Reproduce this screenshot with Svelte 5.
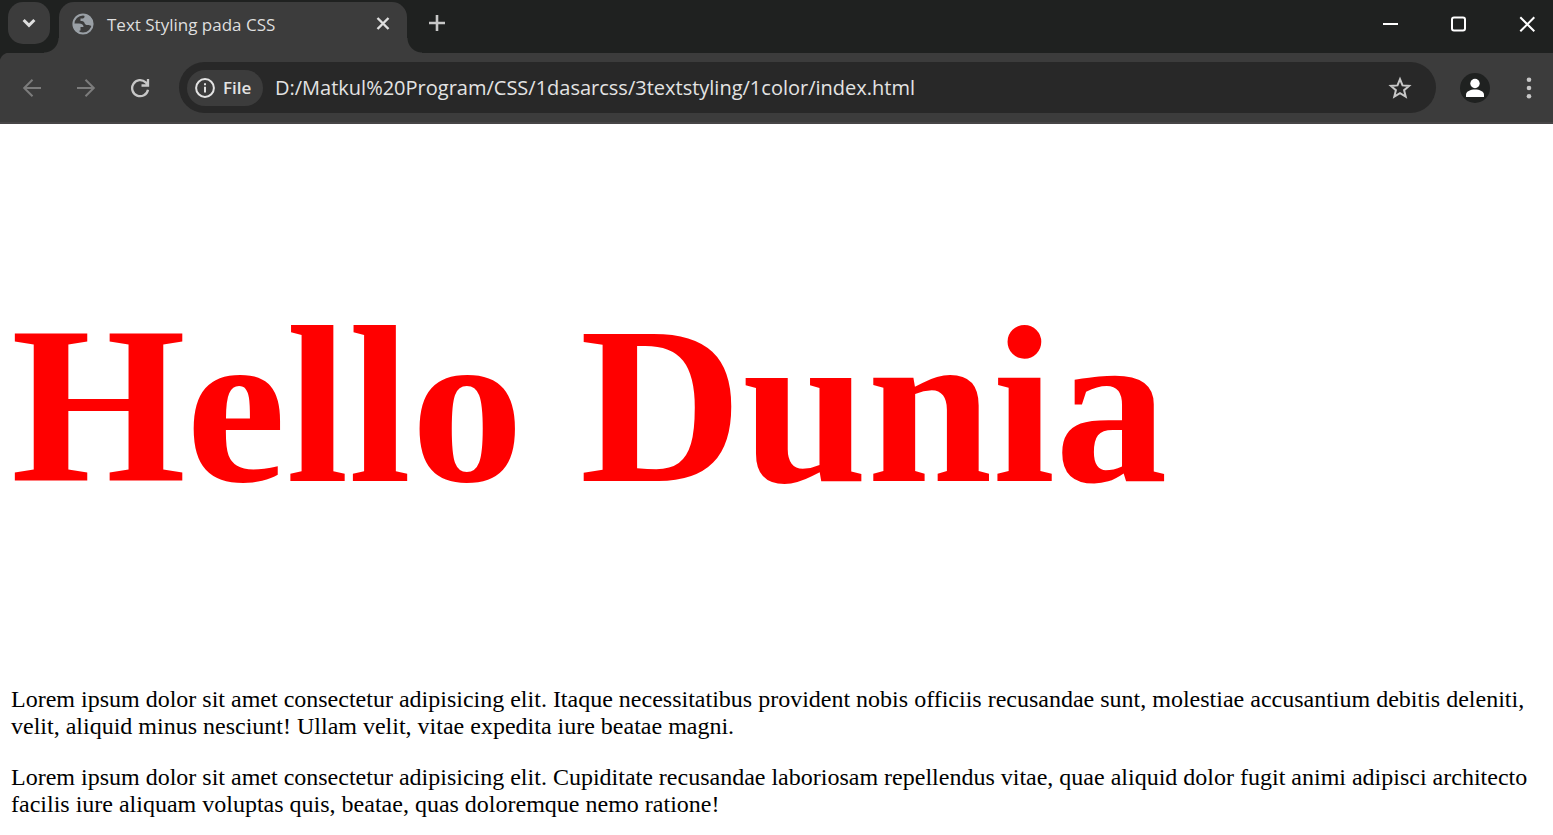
<script>
  let address = $state('D:/Matkul%20Program/CSS/1dasarcss/3textstyling/1color/index.html');
  const paragraphs = [
    'Lorem ipsum dolor sit amet consectetur adipisicing elit. Itaque necessitatibus provident nobis officiis recusandae sunt, molestiae accusantium debitis deleniti, velit, aliquid minus nesciunt! Ullam velit, vitae expedita iure beatae magni.',
    'Lorem ipsum dolor sit amet consectetur adipisicing elit. Cupiditate recusandae laboriosam repellendus vitae, quae aliquid dolor fugit animi adipisci architecto facilis iure aliquam voluptas quis, beatae, quas doloremque nemo ratione!'
  ];
</script>

<div class="window">
  <header class="strip">
    <button class="search" aria-label="Search tabs">
      <svg width="14" height="10" viewBox="0 0 14 10"><path d="M1.6 2l5.4 5.4L12.4 2" /></svg>
    </button>
    <div class="tab">
      <svg class="globe" width="22" height="22" viewBox="0 0 22 22">
        <circle cx="11" cy="11" r="9.6" />
        <path d="M1.5 10.5h5.500c3 0 4.500 1.500 4.500 3.500h-3v3.500h-1v3C3.500 19 1 15.500 1.500 10.500z" />
        <path d="M12.5 1.500v2c0 1.500-1 2-2.500 2H8.500v2.500c2.500 0 3.500.5 4 2 .5 1.500 1.500 2 3 2 2 0 3 .5 5 1.500C22 7 18.500 2 12.500 1.500z" />
      </svg>
      <span class="title">Text Styling pada CSS</span>
      <button class="plain close" aria-label="Close tab">
        <svg width="14" height="14" viewBox="0 0 14 14"><path d="M1.500 1l11 11M12.500 1L1.500 12" /></svg>
      </button>
    </div>
    <button class="plain add" aria-label="New tab">
      <svg width="16" height="16" viewBox="0 0 16 16"><path d="M8 0v16M0 8h16" /></svg>
    </button>
    <div class="controls">
      <button class="plain" aria-label="Minimize">
        <svg width="16" height="16" viewBox="0 0 16 16"><path d="M0 8h15" /></svg>
      </button>
      <button class="plain" aria-label="Maximize">
        <svg width="16" height="16" viewBox="0 0 16 16"><rect x="1" y="1.500" width="13" height="13" rx="2" /></svg>
      </button>
      <button class="plain" aria-label="Close">
        <svg width="16" height="16" viewBox="0 0 16 16"><path d="M1.300 1.300l14 14M15.300 1.300L1.300 15.300" /></svg>
      </button>
    </div>
  </header>

  <nav class="toolbar">
    <button class="plain nav dim" aria-label="Back">
      <svg width="20" height="20" viewBox="0 0 20 20"><path d="M19 10H2.500M10.500 1.700L2.200 10l8.300 8.300" /></svg>
    </button>
    <button class="plain nav dim" aria-label="Forward">
      <svg width="20" height="20" viewBox="0 0 20 20"><path d="M1 10h16.500M9.500 1.700l8.300 8.300-8.300 8.300" /></svg>
    </button>
    <button class="plain nav" aria-label="Reload">
      <svg width="20" height="20" viewBox="0 0 20 20"><path d="M18 11.700A8 8 0 1 1 15.700 4.400L18 6.800M18 1v6.500h-6.500" /></svg>
    </button>
    <div class="address">
      <button class="chip">
        <svg width="20" height="20" viewBox="0 0 20 20">
          <circle cx="10" cy="10" r="8.900" /><path d="M10 8.800v5.700M10 5.300v1.900" />
        </svg>
        File
      </button>
      <input type="text" aria-label="Address" spellcheck="false" bind:value={address} />
      <button class="plain star" aria-label="Bookmark this page">
        <svg width="24" height="24" viewBox="0 0 24 24"><path d="M12 3.200l2.500 6.200 6.600.5-5 4.300 1.600 6.500-5.700-3.500-5.700 3.500 1.600-6.500-5-4.300 6.600-.5z" /></svg>
      </button>
    </div>
    <button class="profile" aria-label="Profile">
      <svg width="20" height="20" viewBox="0 0 20 20"><circle cx="10" cy="5.500" r="4.700" /><path d="M1 19v-2.500c0-3 4.500-5 9-5s9 2 9 5V19z" /></svg>
    </button>
    <button class="plain more" aria-label="Menu">
      <svg width="6" height="22" viewBox="0 0 6 22"><circle cx="3" cy="2.700" r="2.300" /><circle cx="3" cy="11" r="2.300" /><circle cx="3" cy="19.300" r="2.300" /></svg>
    </button>
  </nav>

  <main>
    <h1>Hello Dunia</h1>
    {#each paragraphs as text}
      <p>{text}</p>
    {/each}
  </main>
</div>

<style>
  :global(body) {
    margin: 0;
    background: #fff;
  }
  .window {
    background: #fff;
    font-family: 'Open Sans', 'Noto Sans', sans-serif;
  }
  button {
    display: flex;
    align-items: center;
    justify-content: center;
    padding: 0;
    border: 0;
    color: inherit;
    font: inherit;
  }
  .plain {
    background: none;
  }
  svg {
    display: block;
    flex: none;
    fill: none;
    stroke: currentColor;
    stroke-width: 2;
  }
  .strip {
    display: flex;
    height: 53px;
    padding-left: 8px;
    background: #1f2120;
    color: #dfdfdf;
  }
  .search {
    width: 42px;
    height: 42px;
    margin-top: 2px;
    border-radius: 15px;
    background: #3c3c3c;
  }
  .search svg {
    stroke-width: 3;
  }
  .tab {
    position: relative;
    display: flex;
    align-items: center;
    box-sizing: border-box;
    width: 348px;
    height: 51px;
    margin: 2px 0 0 9px;
    padding: 0 16px 8px 13px;
    border-radius: 15px 15px 0 0;
    background: #3c3c3c;
  }
  .tab::before,
  .tab::after {
    content: '';
    position: absolute;
    bottom: 0;
    width: 15px;
    height: 15px;
  }
  .tab::before {
    right: 100%;
    background: radial-gradient(circle at 0 0, transparent 14px, #3c3c3c 15px);
  }
  .tab::after {
    left: 100%;
    background: radial-gradient(circle at 100% 0, transparent 14px, #3c3c3c 15px);
  }
  .globe {
    color: #9aa0a6;
  }
  .globe path {
    fill: currentColor;
    stroke: none;
  }
  .title {
    flex: 1;
    margin-left: 13px;
    padding-top: 2px;
    font-size: 17px;
    line-height: 24px;
    white-space: nowrap;
  }
  .close {
    width: 16px;
    height: 24px;
  }
  .close svg,
  .add svg {
    stroke-width: 3;
  }
  .close svg {
    stroke-width: 2.4;
  }
  .add {
    width: 60px;
    height: 46px;
    color: #c7c7c7;
  }
  .add svg {
    stroke-width: 2.6;
  }
  .controls {
    display: flex;
    margin-left: auto;
    height: 48px;
    color: #fff;
  }
  .controls button {
    width: 68px;
  }
  .controls button:last-child {
    width: 52px;
    margin-left: 8px;
  }
  .toolbar {
    display: flex;
    align-items: center;
    box-sizing: border-box;
    height: 71px;
    padding: 0 16px 0 5px;
    border-bottom: 2px solid #474546;
    background: radial-gradient(circle at 10px 10px, #3c3c3c 10px, #1f2120 11px) 0 0 / 10px 10px no-repeat #3c3c3c;
    color: #c7c7c7;
  }
  .nav {
    width: 54px;
    height: 49px;
  }
  .nav:not(.dim) svg {
    stroke-width: 2.3;
  }
  .dim {
    color: #7c7c7c;
  }
  .address {
    display: flex;
    align-items: center;
    flex: 1;
    min-width: 0;
    box-sizing: border-box;
    height: 51px;
    margin-left: 12px;
    padding: 0 24px 0 8px;
    border-radius: 26px;
    background: #282828;
  }
  .chip {
    flex: none;
    justify-content: flex-start;
    gap: 8px;
    box-sizing: border-box;
    width: 76px;
    height: 36px;
    padding-left: 8px;
    border-radius: 18px;
    background: #3c3c3c;
    color: #e3e3e3;
    font-size: 17px;
    font-weight: 600;
  }
  input {
    flex: 1;
    min-width: 0;
    height: 36px;
    margin: 0 12px;
    padding: 0;
    border: 0;
    outline: 0;
    background: none;
    color: #e3e3e3;
    font-family: inherit;
    font-size: 20px;
  }
  .profile {
    width: 30px;
    height: 30px;
    margin-left: 24px;
    border-radius: 50%;
    background: #1f2120;
    color: #fff;
  }
  .profile svg,
  .more svg {
    fill: currentColor;
    stroke: none;
  }
  .more {
    width: 16px;
    height: 36px;
    margin-left: 31px;
  }
  main {
    padding: 0 11px;
    color: #000;
    font-family: 'Liberation Serif', 'Times New Roman', serif;
    font-size: 24px;
    line-height: 27px;
  }
  h1 {
    margin: 0;
    padding: 152px 0 151px;
    color: #f00;
    font-size: 225px;
    line-height: 259px;
  }
  p {
    margin: 0 0 24px;
  }
</style>
